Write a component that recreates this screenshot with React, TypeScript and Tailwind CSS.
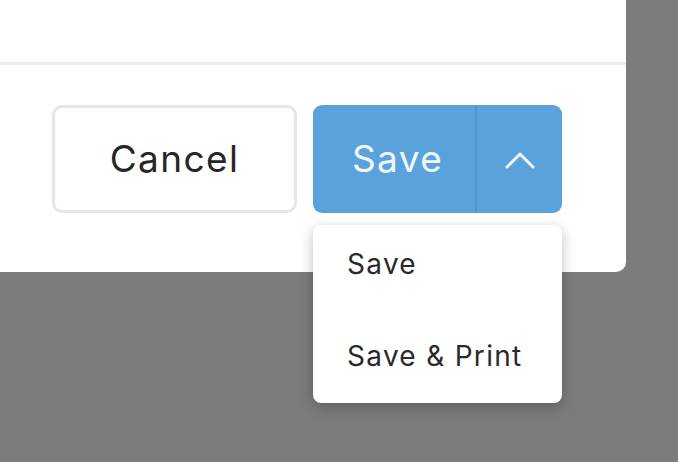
import type { FC } from "react";

const font = { fontFamily: "Inter, 'Noto Sans', sans-serif" };

const ChevronUp: FC = () => (
    <svg width="32" height="18" viewBox="0 0 32 18" fill="none">
        <path
            d="M3 16 L16 3 L29 16"
            stroke="#f4f9fd"
            strokeWidth="3"
            strokeLinecap="round"
            strokeLinejoin="round"
        />
    </svg>
);

export default function App() {
    return (
        <div
            className="w-[678px] h-[462px] bg-[#7b7c7e] overflow-hidden"
            style={font}
        >
            <div className="w-[626px] h-[272px] bg-white rounded-br-[10px] flex flex-col">
                <div className="h-[62px]" />
                <div className="h-[3px] bg-[#ececec]" />
                <div className="flex justify-end gap-4 pr-[64px] pt-[40px]">
                    <button className="w-[245px] h-[108px] rounded-[10px] border-[3px] border-[#e6e6e6] bg-white text-[#262626] text-[37px] tracking-[1.4px]">
                        Cancel
                    </button>
                    <div className="relative">
                        <div className="flex w-[249px] h-[108px] rounded-[9px] bg-[#5aa2db] overflow-hidden">
                            <button className="w-[162px] pl-[7px] text-[37px] text-[#f1f8fd] tracking-[1.4px]">
                                Save
                            </button>
                            <div className="w-[2px] bg-[#4f96d0]" />
                            <button className="flex-1 flex items-center justify-center pt-[2px]">
                                <ChevronUp />
                            </button>
                        </div>
                        <div className="absolute left-0 top-[120px] w-[249px] h-[178px] bg-white rounded-[8px] shadow-[0_4px_14px_rgba(0,0,0,0.25)] flex flex-col pt-[25px] pl-[34px] gap-[64px] text-[#2a2a2a] text-[28px] tracking-[1.3px]">
                            <span className="leading-none">Save</span>
                            <span className="leading-none">Save &amp; Print</span>
                        </div>
                    </div>
                </div>
            </div>
        </div>
    );
}
